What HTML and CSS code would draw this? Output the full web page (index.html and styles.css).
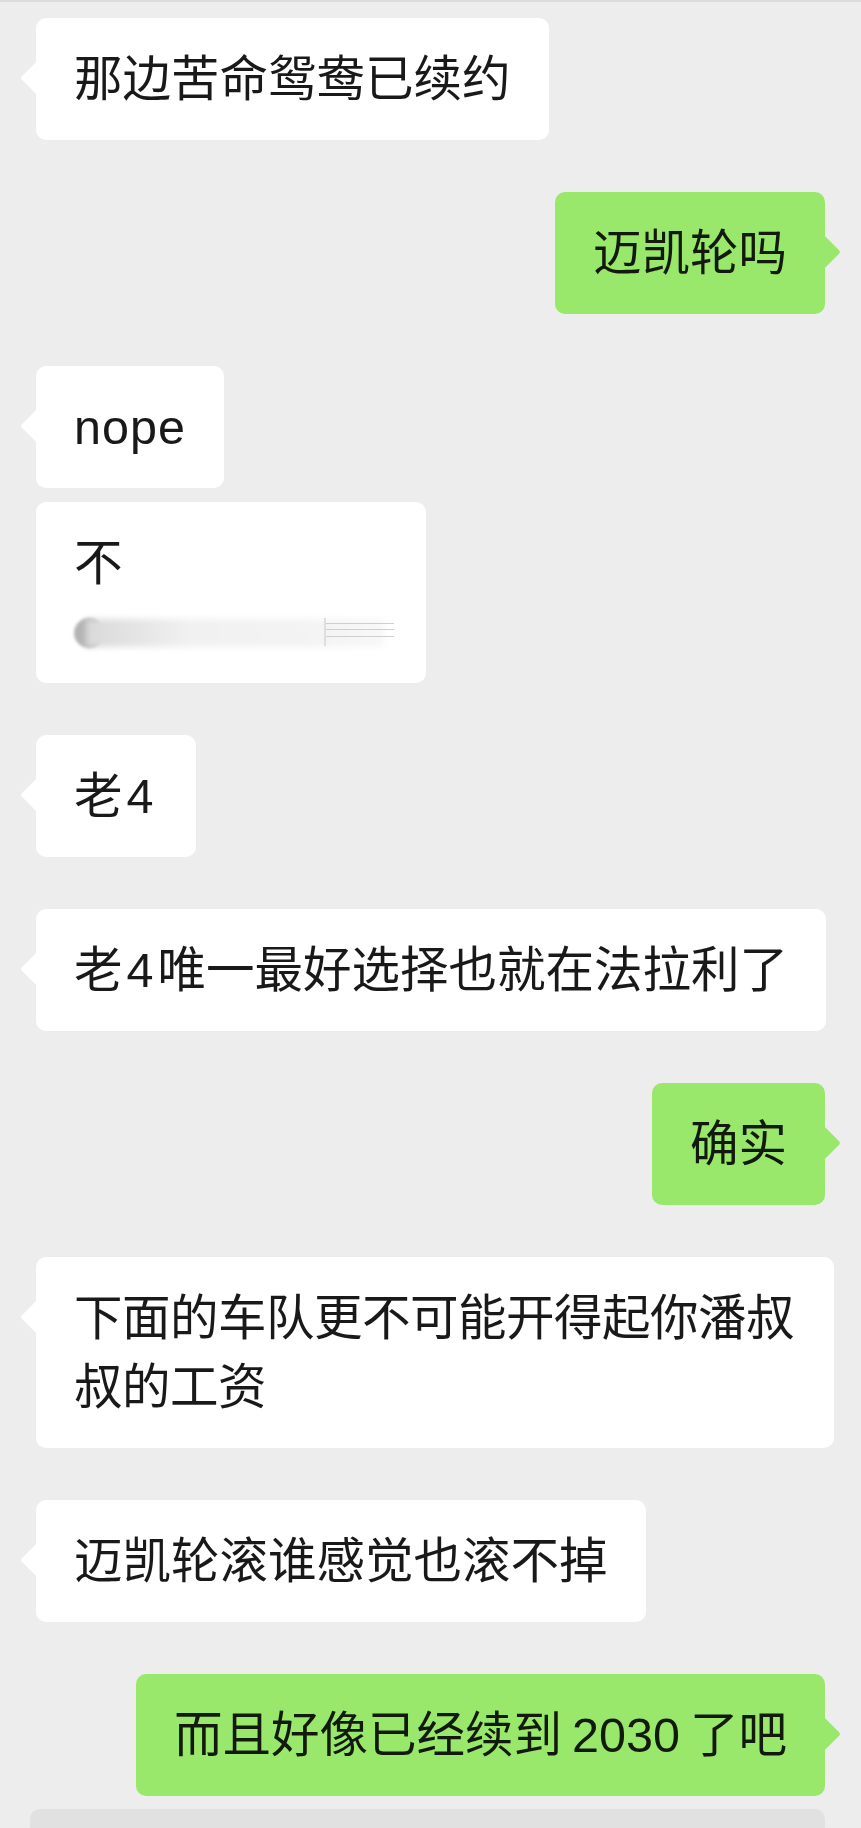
FILE: index.html
```html
<!DOCTYPE html>
<html lang="zh-CN">
<head>
    <meta charset="UTF-8">
    <meta name="viewport" content="width=device-width, initial-scale=1.0">
    <title>聊天记录</title>
    <link rel="stylesheet" href="styles.css">
</head>
<body>
    <div class="chat">
        <div class="row left">
            <div class="bubble">那边苦命鸳鸯已续约</div>
        </div>
        <div class="row right">
            <div class="bubble green">迈凯轮吗</div>
        </div>
        <div class="row left">
            <div class="bubble"><span class="latin">nope</span></div>
        </div>
        <!-- same sender, no tail -->
        <div class="row left cont">
            <div class="bubble no-tail">
                不
                <div class="blurred">
                    <span class="blur-dot"></span>
                    <span class="blur-band"></span>
                    <span class="blur-tick"></span>
                    <span class="blur-lines"></span>
                </div>
            </div>
        </div>
        <div class="row left">
            <div class="bubble">老<span class="num">4</span></div>
        </div>
        <div class="row left">
            <div class="bubble">老<span class="num">4</span>唯一最好选择也就在法拉利了</div>
        </div>
        <div class="row right">
            <div class="bubble green">确实</div>
        </div>
        <div class="row left">
            <div class="bubble tight">下面的车队更不可能开得起你潘叔叔的工资</div>
        </div>
        <div class="row left">
            <div class="bubble">迈凯轮滚谁感觉也滚不掉</div>
        </div>
        <div class="row right">
            <div class="bubble green">而且好像已经续到<span class="num wide">2030</span>了吧</div>
        </div>
        <!-- next message, cut off by the screenshot -->
        <div class="cutoff"></div>
    </div>
</body>
</html>
```

FILE: styles.css
```css
body {
    margin: 0;
    padding: 0;
    background-color: #ededed;
    font-family: "Liberation Sans", "Noto Sans CJK SC", sans-serif;
    color: #191919;
    overflow: hidden;
}
.chat {
    border-top: 2px solid #dcdcdc;
    padding-top: 16px;
    display: flex;
    flex-direction: column;
}
.row {
    display: flex;
    margin-top: 52px;
}
.row:first-child {
    margin-top: 0;
}
.row.cont {
    margin-top: 14px;
}
.row.left {
    justify-content: flex-start;
    padding-left: 36px;
}
.row.right {
    justify-content: flex-end;
    padding-right: 36px;
}
.bubble {
    position: relative;
    box-sizing: border-box;
    max-width: 798px;
    padding: 27px 38px 26px;
    font-size: 48.5px;
    line-height: 69px;
    background: #ffffff;
    border-radius: 10px;
}
/* long message, glyphs sit a touch closer */
.bubble.tight {
    letter-spacing: -0.5px;
}
/* little pointer on the side */
.bubble::before {
    content: "";
    position: absolute;
    top: 48px;
    left: -11px;
    width: 24px;
    height: 24px;
    background: inherit;
    border-radius: 3px;
    transform: rotate(45deg);
}
.bubble.no-tail {
    padding-right: 32px;
}
.bubble.no-tail::before {
    display: none;
}
.bubble.green {
    background: #99e86b;
    color: #111a0c;
}
.bubble.green::before {
    left: auto;
    right: -11px;
}
.latin {
    letter-spacing: 1px;
}
.num {
    margin: 0 4px;
}
.num.wide {
    margin: 0 10px;
}
/* the smudged out line under 不 */
.blurred {
    position: relative;
    width: 320px;
    height: 30px;
    margin: 20px 0 9px;
}
.blurred span {
    position: absolute;
    display: block;
}
.blur-dot {
    left: 0;
    top: 0;
    width: 30px;
    height: 30px;
    border-radius: 15px;
    background: #b4b4b4;
    filter: blur(1.5px);
}
.blur-band {
    left: 12px;
    top: 1px;
    width: 298px;
    height: 28px;
    background: linear-gradient(to right, #d9d9d9, #f1f1f1 35%, #f4f4f4 80%, #f8f8f8);
    filter: blur(3px);
}
.blur-tick {
    left: 250px;
    top: 0;
    width: 2px;
    height: 28px;
    background: #dedede;
}
.blur-lines {
    left: 252px;
    top: 5px;
    width: 68px;
    height: 12px;
    border-top: 1px solid #cfcfcf;
    border-bottom: 1px solid #cfcfcf;
}
.blur-lines::after {
    content: "";
    position: absolute;
    left: 0;
    right: 0;
    top: 5px;
    border-top: 1px solid #cfcfcf;
}
.cutoff {
    margin: 13px 36px 0 30px;
    height: 60px;
    background: #e1e1e1;
    border-radius: 10px;
}
```
